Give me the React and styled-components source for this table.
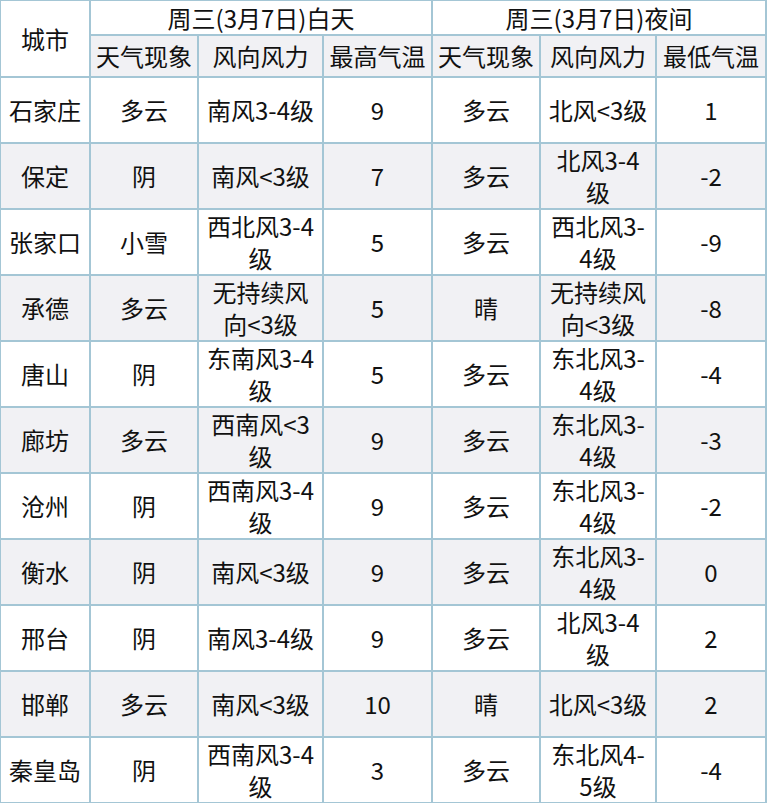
import React from "react";
import styled, { createGlobalStyle } from "styled-components";

const GlobalStyle = createGlobalStyle`
  body {
    margin: 0;
    background: #ffffff;
  }
`;

const LINE = "#a4c6d5";
const SHADE = "#f1f1f4";

const Table = styled.table`
  width: 767px;
  table-layout: fixed;
  border-collapse: separate;
  border-spacing: 0;
  border-left: 1px solid ${LINE};
  border-top: 1px solid ${LINE};
  font-family: "Noto Sans CJK SC", "Noto Sans", sans-serif;
  font-size: 24px;
  color: #111111;
`;

const Row = styled.tr`
  background: ${(p) => (p.$shade ? SHADE : "#ffffff")};
`;

const Cell = styled.td`
  box-sizing: border-box;
  height: ${(p) => p.$h || 66}px;
  padding: 0;
  text-align: center;
  vertical-align: middle;
  line-height: 32px;
  white-space: nowrap;
  border-right: 2px solid ${LINE};
  border-bottom: 2px solid ${LINE};
`;

const HeadCell = styled(Cell).attrs({ as: "th" })`
  font-weight: normal;
  line-height: 30px;
`;

const Line = styled.span`
  display: block;
`;

const widths = [90, 108, 125, 109, 108, 116, 110];

const rows = [
  ["石家庄", "多云", ["南风3-4级"], "9", "多云", ["北风<3级"], "1"],
  ["保定", "阴", ["南风<3级"], "7", "多云", ["北风3-4", "级"], "-2"],
  ["张家口", "小雪", ["西北风3-4", "级"], "5", "多云", ["西北风3-", "4级"], "-9"],
  ["承德", "多云", ["无持续风", "向<3级"], "5", "晴", ["无持续风", "向<3级"], "-8"],
  ["唐山", "阴", ["东南风3-4", "级"], "5", "多云", ["东北风3-", "4级"], "-4"],
  ["廊坊", "多云", ["西南风<3", "级"], "9", "多云", ["东北风3-", "4级"], "-3"],
  ["沧州", "阴", ["西南风3-4", "级"], "9", "多云", ["东北风3-", "4级"], "-2"],
  ["衡水", "阴", ["南风<3级"], "9", "多云", ["东北风3-", "4级"], "0"],
  ["邢台", "阴", ["南风3-4级"], "9", "多云", ["北风3-4", "级"], "2"],
  ["邯郸", "多云", ["南风<3级"], "10", "晴", ["北风<3级"], "2"],
  ["秦皇岛", "阴", ["西南风3-4", "级"], "3", "多云", ["东北风4-", "5级"], "-4"],
];

function CellText({ value }) {
  if (!Array.isArray(value)) return value;
  return value.map((line, i) => <Line key={i}>{line}</Line>);
}

export default function App() {
  return (
    <>
      <GlobalStyle />
      <Table>
        <colgroup>
          {widths.map((w, i) => (
            <col key={i} style={{ width: w }} />
          ))}
        </colgroup>
        <thead>
          <Row>
            <HeadCell rowSpan={2} $h={35}>
              城市
            </HeadCell>
            <HeadCell colSpan={3} $h={35}>
              周三(3月7日)白天
            </HeadCell>
            <HeadCell colSpan={3} $h={35}>
              周三(3月7日)夜间
            </HeadCell>
          </Row>
          <Row $shade>
            <HeadCell $h={42}>天气现象</HeadCell>
            <HeadCell $h={42}>风向风力</HeadCell>
            <HeadCell $h={42}>最高气温</HeadCell>
            <HeadCell $h={42}>天气现象</HeadCell>
            <HeadCell $h={42}>风向风力</HeadCell>
            <HeadCell $h={42}>最低气温</HeadCell>
          </Row>
        </thead>
        <tbody>
          {rows.map((r, i) => (
            <Row key={r[0]} $shade={i % 2 === 1}>
              {r.map((v, j) => (
                <Cell key={j}>
                  <CellText value={v} />
                </Cell>
              ))}
            </Row>
          ))}
        </tbody>
      </Table>
    </>
  );
}
